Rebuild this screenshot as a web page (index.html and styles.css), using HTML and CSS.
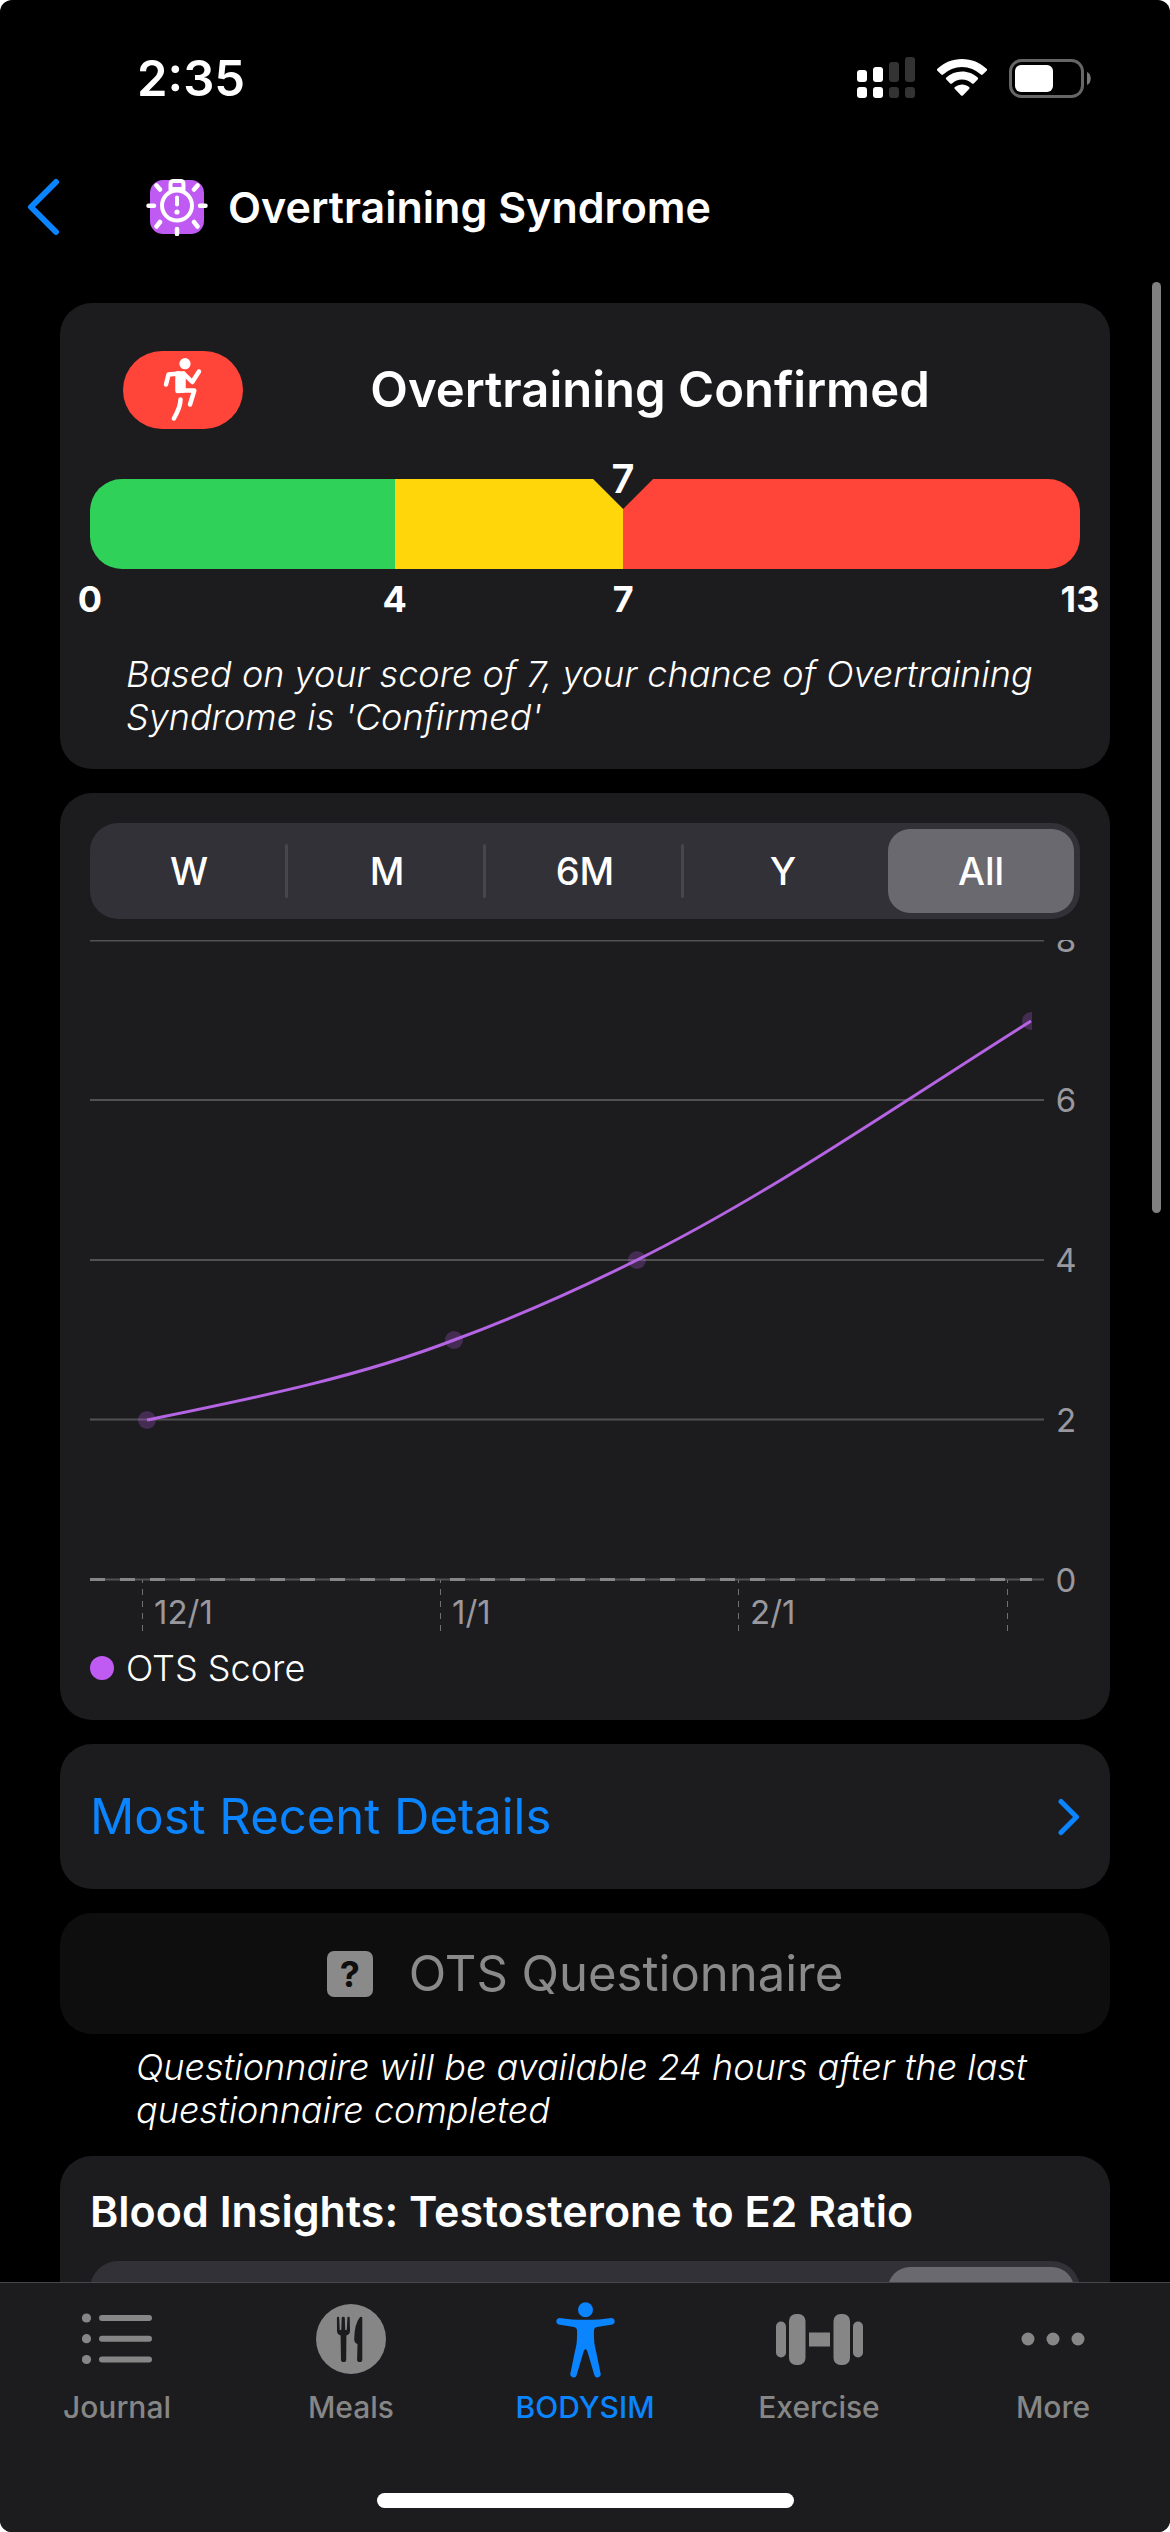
FILE: index.html
```html
<!DOCTYPE html>
<html lang="en">
<head>
<meta charset="utf-8">
<meta name="viewport" content="width=device-width, initial-scale=1">
<title>Overtraining Syndrome</title>
<link rel="stylesheet" href="styles.css">
</head>
<body>
<div class="app">
  <div class="status">
    <span class="status-time">2:35</span>
    <div class="status-icons">
      <svg width="58" height="42" viewBox="0 0 58 42" fill="#fff" aria-hidden="true">
        <rect x="0" y="13" width="10" height="12" rx="3"/><rect x="0" y="30" width="10" height="11" rx="3"/>
        <rect x="16" y="10" width="10" height="15" rx="3"/><rect x="16" y="30" width="10" height="11" rx="3"/>
        <g fill="#333">
          <rect x="32" y="5" width="10" height="20" rx="3"/><rect x="32" y="30" width="10" height="11" rx="3"/>
          <rect x="48" y="0" width="10" height="25" rx="3"/><rect x="48" y="30" width="10" height="11" rx="3"/>
        </g>
      </svg>
      <svg width="50" height="38" viewBox="0 0 50 38" fill="#fff" aria-hidden="true">
        <path d="M25 0C34.500 0 43.200 3.700 49.600 9.800a1.300 1.300 0 0 1 0 1.900l-3.900 3.900a1.300 1.300 0 0 1-1.800 0a27.200 27.200 0 0 0-37.800 0a1.300 1.300 0 0 1-1.800 0L.4 11.700a1.300 1.300 0 0 1 0-1.900C6.800 3.700 15.500 0 25 0Z"/>
        <path d="M25 12.500c6 0 11.500 2.300 15.700 6.100a1.300 1.300 0 0 1 0 1.900l-3.900 3.900a1.300 1.300 0 0 1-1.800 0a14.700 14.700 0 0 0-20 0a1.300 1.300 0 0 1-1.800 0l-3.900-3.900a1.300 1.300 0 0 1 0-1.900C13.500 14.800 19 12.500 25 12.500Z"/>
        <path d="M25 25.500c2.700 0 5.200 1 7.100 2.600a1.200 1.200 0 0 1 0 1.900l-6.200 6.400a1.300 1.300 0 0 1-1.800 0L17.900 30a1.200 1.200 0 0 1 0-1.900A11 11 0 0 1 25 25.500Z"/>
      </svg>
      <svg width="82" height="39" viewBox="0 0 82 39" aria-hidden="true">
        <rect x="1.500" y="1.500" width="72" height="36" rx="11" fill="none" stroke="#666" stroke-width="3"/>
        <rect x="6" y="6" width="38" height="27" rx="6" fill="#fff"/>
        <path d="M78 13c5 2 5 11 0 13Z" fill="#777"/>
      </svg>
    </div>
  </div>

  <header class="nav">
    <button class="back" type="button" aria-label="Back">
      <svg width="34" height="58" viewBox="0 0 34 58" fill="none" stroke="#0a84ff" stroke-width="6" stroke-linecap="round" stroke-linejoin="round"><path d="M30 4L5 29L30 54"/></svg>
    </button>
    <svg class="nav-icon" width="62" height="58" viewBox="0 0 62 58" fill="none" stroke="#fff" stroke-width="4.500" stroke-linecap="round" aria-hidden="true">
      <rect x="4" y="2" width="54" height="54" rx="13" fill="#bf5af2" stroke="none"/>
      <circle cx="31" cy="27.500" r="15" stroke-width="4"/>
      <path d="M24.500 12V6q0-3 3-3h7q3 0 3 3v6" stroke-width="4"/>
      <path d="M25 10.500h12" stroke-width="3"/>
      <path d="M31 19.500v7" stroke-width="4"/>
      <circle cx="31" cy="34" r="2.600" fill="#fff" stroke="none"/>
      <path d="M2.500 27.700h5.500M54 27.700h5.500M31 51v5M10.500 7.500l3.500 4M51.500 7.500l-3.500 4M10.500 48.500l3.500-4.500M51.500 48.500l-3.500-4.500"/>
    </svg>
    <h1 class="nav-title">Overtraining Syndrome</h1>
  </header>

  <main class="content">
    <section class="card result">
      <div class="result-head">
        <span class="pill">
          <svg width="40" height="68" viewBox="0 0 40 68" fill="none" stroke="#fff" stroke-width="4.500" stroke-linecap="round" stroke-linejoin="round" aria-hidden="true">
            <circle cx="22" cy="7.700" r="5.600" fill="#fff" stroke="none"/>
            <path d="M15.500 17.500L5.500 18.500L3 28.500"/>
            <path d="M21 18L29.300 26L36 15.500"/>
            <path d="M14.500 17.500H20.500V34.500L14.500 35Z" fill="#fff"/>
            <path d="M17 34.500H31.300L27 48.500"/>
            <path d="M17.500 43.500Q17.500 51 10.900 62.500"/>
          </svg>
        </span>
        <h2 class="result-title">Overtraining Confirmed</h2>
      </div>
      <div class="gauge">
        <div class="gauge-bar">
          <div class="zone zone-low"></div>
          <div class="zone zone-mid"></div>
          <div class="zone zone-high"></div>
        </div>
        <div class="marker" style="left: 53.85%"><span class="marker-value">7</span></div>
      </div>
      <div class="scale">
        <span class="tick" style="left: 0%">0</span>
        <span class="tick" style="left: 30.77%">4</span>
        <span class="tick" style="left: 53.85%">7</span>
        <span class="tick" style="left: 100%">13</span>
      </div>
      <p class="caption">Based on your score of 7, your chance of Overtraining Syndrome is 'Confirmed'</p>
    </section>

    <section class="card">
      <div class="segmented" role="radiogroup" aria-label="Range">
        <label class="segment"><input type="radio" name="range">W</label>
        <label class="segment"><input type="radio" name="range">M</label>
        <label class="segment"><input type="radio" name="range">6M</label>
        <label class="segment"><input type="radio" name="range">Y</label>
        <label class="segment"><input type="radio" name="range" checked>All</label>
      </div>
      <svg class="chart" viewBox="0 0 990 700" role="img" aria-label="OTS Score over time">
        <defs><clipPath id="plot"><rect x="0" y="0" width="942" height="641"/></clipPath></defs>
        <g class="grid">
          <path d="M0 .5H954M0 160H954M0 320H954M0 479.500H954M0 639.500H954"/>
        </g>
        <path class="baseline" d="M0 639.500H942"/>
        <path class="ticks" d="M52.500 640V692M350.500 640V692M648.500 640V692M917.500 640V692"/>
        <g clip-path="url(#plot)">
          <g class="points">
            <circle cx="57" cy="480" r="9"/><circle cx="364" cy="400" r="9"/>
            <circle cx="547" cy="320" r="9"/><circle cx="941" cy="81" r="9"/>
          </g>
          <path class="series" d="M57 480C159 459 266 438 364 400C426 377 487 350 547 320C682 253 812 162 941 81"/>
        </g>
        <g class="axis" text-anchor="middle">
          <text x="976" y="12">8</text><text x="976" y="172">6</text><text x="976" y="332">4</text>
          <text x="976" y="492">2</text><text x="976" y="652">0</text>
        </g>
        <g class="axis">
          <text x="64" y="684">12/1</text><text x="362" y="684">1/1</text><text x="660" y="684">2/1</text>
        </g>
      </svg>
      <div class="legend"><span class="legend-dot"></span>OTS Score</div>
    </section>

    <a class="card link-card" href="#details">
      <span>Most Recent Details</span>
      <svg width="22" height="38" viewBox="0 0 22 38" fill="none" stroke="#0a84ff" stroke-width="5" stroke-linecap="round" stroke-linejoin="round" aria-hidden="true"><path d="M3 3.500L18.500 19L3 34.500"/></svg>
    </a>

    <div class="questionnaire">
      <button class="quiz-button" type="button" disabled>
        <span class="quiz-icon" aria-hidden="true">?</span>
        <span>OTS Questionnaire</span>
      </button>
      <p class="note">Questionnaire will be available 24 hours after the last questionnaire completed</p>
    </div>

    <section class="card">
      <h2 class="insights-title">Blood Insights: Testosterone to E2 Ratio</h2>
      <div class="segmented" role="radiogroup" aria-label="Insights range">
        <label class="segment"><input type="radio" name="insights" aria-label="W"></label>
        <label class="segment"><input type="radio" name="insights" aria-label="M"></label>
        <label class="segment"><input type="radio" name="insights" aria-label="6M"></label>
        <label class="segment"><input type="radio" name="insights" aria-label="Y"></label>
        <label class="segment"><input type="radio" name="insights" aria-label="All" checked></label>
      </div>
    </section>
    <div class="scrollbar"></div>
  </main>

  <footer class="tabbar">
    <nav class="tabs">
      <a class="tab" href="#journal">
        <span class="tab-icon"><svg width="70" height="52" viewBox="0 0 70 52" fill="currentColor" aria-hidden="true">
          <circle cx="4.500" cy="5" r="4.600"/><circle cx="4.500" cy="25.700" r="4.600"/><circle cx="4.500" cy="46.500" r="4.600"/>
          <rect x="17" y="2" width="53" height="6" rx="3"/><rect x="17" y="22.700" width="53" height="6" rx="3"/><rect x="17" y="43.500" width="53" height="6" rx="3"/>
        </svg></span>
        Journal
      </a>
      <a class="tab" href="#meals">
        <span class="tab-icon"><svg width="70" height="70" viewBox="0 0 70 70" aria-hidden="true">
          <circle cx="35" cy="35" r="35" fill="#868686"/>
          <g fill="#1c1c1e">
            <path d="M22 12.700q1.200 0 1.200 1.300L23.700 26h1.600L25.700 14q0-1.300 1.500-1.300T28.800 14L29.200 26h1.600L31.400 14q0-1.300 1.200-1.300T33.700 14L34 27q0 3-3.600 4.500L30.200 55.500a2.600 2.600 0 0 1-5.200 0L24.600 31.500Q21 30 21 27L20.900 14q0-1.300 1.100-1.300Z"/>
            <path d="M45 12.700q1.300 0 1.300 1.300V55.500a2.600 2.600 0 0 1-5.200 0L41.500 40Q38 38.500 38.200 35Q38.500 20 43.500 13.800Q44.300 12.700 45 12.700Z"/>
          </g>
        </svg></span>
        Meals
      </a>
      <a class="tab tab-active" href="#bodysim">
        <span class="tab-icon"><svg width="61" height="77" viewBox="0 0 61 77" fill="currentColor" aria-hidden="true">
          <circle cx="30.500" cy="8.700" r="7.500"/>
          <path d="M4.500 16.900C20 19.500 41 19.500 56.500 16.900A3.500 3.500 0 0 1 57.600 23.600L42 26Q39 26.500 39 29.500Q38.500 42 41 50L45.500 72A3.200 3.200 0 0 1 39.400 74.200L32.400 50.500Q30.500 45.500 28.600 50.500L21.600 74.200A3.200 3.200 0 0 1 15.500 72L20 50Q22.500 42 22 29.500Q22 26.500 19 26L3.400 23.600A3.500 3.500 0 0 1 4.500 16.900Z"/>
        </svg></span>
        BODYSIM
      </a>
      <a class="tab" href="#exercise">
        <span class="tab-icon"><svg width="87" height="51" viewBox="0 0 87 51" fill="currentColor" aria-hidden="true">
          <rect x="0" y="7.500" width="10" height="36" rx="5"/><rect x="13" y="0" width="16.500" height="51" rx="7"/>
          <rect x="33" y="18.500" width="21" height="14"/>
          <rect x="57.500" y="0" width="16.500" height="51" rx="7"/><rect x="77" y="7.500" width="10" height="36" rx="5"/>
        </svg></span>
        Exercise
      </a>
      <a class="tab" href="#more">
        <span class="tab-icon"><svg width="64" height="14" viewBox="0 0 64 14" fill="currentColor" aria-hidden="true">
          <circle cx="7" cy="7" r="6.500"/><circle cx="32" cy="7" r="6.500"/><circle cx="57" cy="7" r="6.500"/>
        </svg></span>
        More
      </a>
    </nav>
    <div class="home-indicator"></div>
  </footer>
</div>
</body>
</html>
```
FILE: styles.css
```css
* {
  box-sizing: border-box;
}

html {
  background: #fff;
}

body {
  margin: 0;
  font-family: Inter, "Liberation Sans", sans-serif;
  color: #fff;
}

h1, h2, p {
  margin: 0;
}

svg {
  display: block;
  flex-shrink: 0;
}

button {
  border: 0;
  padding: 0;
  background: none;
  font: inherit;
  color: inherit;
}

a {
  color: inherit;
  text-decoration: none;
}

.app {
  display: flex;
  flex-direction: column;
  height: 100vh;
  overflow: hidden;
  background: #000;
  border-radius: 12px;
}

/* Status bar */
.status {
  display: flex;
  align-items: center;
  justify-content: space-between;
  flex-shrink: 0;
  height: 156px;
  padding: 0 79px 0 137px;
}

.status-time {
  font-size: 49px;
  font-weight: 600;
}

.status-icons {
  display: flex;
  align-items: center;
  gap: 22px;
}

/* Navigation header */
.nav {
  display: flex;
  align-items: center;
  flex-shrink: 0;
  height: 102px;
  padding: 0 26px;
}

.back {
  margin-right: 86px;
}

.nav-icon {
  margin-right: 20px;
}

.nav-title {
  font-size: 43px;
  font-weight: 600;
}

/* Scrolling content */
.content {
  position: relative;
  display: flex;
  flex: 1;
  flex-direction: column;
  gap: 24px;
  min-height: 0;
  padding: 45px 60px 0;
  overflow: hidden;
}

.scrollbar {
  position: absolute;
  top: 24px;
  right: 9px;
  width: 9px;
  height: 46%;
  border-radius: 5px;
  background: #808080;
}

.card {
  flex-shrink: 0;
  padding: 30px;
  border-radius: 32px;
  background: #1c1c1e;
}

/* Result card */
.result {
  padding-top: 48px;
}

.result-head {
  display: flex;
  align-items: center;
  gap: 10px;
  padding: 0 33px;
}

.pill {
  display: flex;
  align-items: center;
  justify-content: center;
  width: 120px;
  height: 78px;
  border-radius: 39px;
  background: #ff453a;
}

.result-title {
  flex: 1;
  font-size: 49px;
  font-weight: 600;
  line-height: 60px;
  text-align: center;
}

.gauge {
  position: relative;
  margin-top: 50px;
}

.gauge-bar {
  display: flex;
  height: 90px;
  overflow: hidden;
  border-radius: 32px;
}

.zone-low {
  flex: 4;
  background: #30d158;
}

.zone-mid {
  flex: 3;
  background: #ffd60a;
}

.zone-high {
  flex: 6;
  background: #ff453a;
}

.marker {
  position: absolute;
  top: -30px;
  width: 60px;
  height: 60px;
  transform: translateX(-50%);
  background: #1c1c1e;
  clip-path: polygon(0 0, 100% 0, 100% 50%, 50% 100%, 0 50%);
  text-align: center;
}

.marker-value {
  font-size: 40px;
  font-weight: 600;
  line-height: 60px;
}

.scale {
  position: relative;
  height: 44px;
  margin-top: 8px;
}

.tick {
  position: absolute;
  transform: translateX(-50%);
  font-size: 36px;
  font-weight: 700;
  line-height: 44px;
}

.caption,
.note {
  font-size: 36px;
  font-style: italic;
  font-weight: 300;
  line-height: 43px;
}

.caption {
  margin-top: 32px;
  padding: 0 36px;
}

/* Segmented control */
.segmented {
  display: grid;
  grid-template-columns: repeat(5, 1fr);
  height: 96px;
  border-radius: 28px;
  background: #323137;
}

.segment {
  position: relative;
  display: flex;
  align-items: center;
  justify-content: center;
  font-size: 38px;
  font-weight: 500;
}

.segment input {
  position: absolute;
  inset: 0;
  margin: 0;
  opacity: 0;
}

.segment::after {
  content: "";
  position: absolute;
  top: 21px;
  right: 0;
  bottom: 21px;
  width: 3px;
  border-radius: 2px;
  background: #47464c;
}

.segment:nth-last-child(-n + 2)::after {
  display: none;
}

.segment:has(:checked) {
  margin: 6px;
  border-radius: 22px;
  background: #6a696f;
}

/* Chart */
.chart {
  width: 100%;
  height: auto;
  margin-top: 21px;
  overflow: hidden;
}

.grid {
  stroke: #515153;
  stroke-width: 2;
}

.baseline {
  stroke: #868686;
  stroke-width: 3;
  stroke-dasharray: 15 15;
}

.ticks {
  stroke: #707073;
  stroke-width: 1;
  stroke-dasharray: 6 6;
  stroke-dashoffset: 3;
}

.points {
  fill: #bf5af2;
  fill-opacity: 0.25;
}

.series {
  fill: none;
  stroke: #b564e3;
  stroke-width: 3;
}

.axis {
  fill: #98989e;
  font-size: 33px;
}

.legend {
  display: flex;
  align-items: center;
  gap: 12px;
  margin-top: 6px;
  font-size: 36px;
  font-weight: 300;
  line-height: 44px;
}

.legend-dot {
  width: 24px;
  height: 24px;
  border-radius: 50%;
  background: #bf5af2;
}

/* Details link and questionnaire */
.link-card {
  display: flex;
  align-items: center;
  justify-content: space-between;
  padding: 42px 30px;
  color: #0a84ff;
  font-size: 49px;
  line-height: 61px;
}

.quiz-button {
  display: flex;
  align-items: center;
  justify-content: center;
  gap: 36px;
  width: 100%;
  padding: 30px;
  border-radius: 32px;
  background: #0e0e0f;
  color: #8a8a8a;
  font-size: 49px;
  line-height: 61px;
}

.quiz-icon {
  width: 46px;
  height: 46px;
  border-radius: 7px;
  background: #8a8a8a;
  color: #0e0e0f;
  font-size: 36px;
  font-weight: 700;
  line-height: 46px;
}

.note {
  margin-top: 12px;
  padding: 0 76px;
}

.insights-title {
  margin-bottom: 25px;
  font-size: 43px;
  font-weight: 600;
  line-height: 50px;
}

/* Tab bar */
.tabbar {
  flex-shrink: 0;
  padding-bottom: 24px;
  border-top: 1px solid #48484b;
  background: #1c1c1e;
}

.tabs {
  display: flex;
  padding-top: 16px;
}

.tab {
  display: flex;
  flex: 1;
  flex-direction: column;
  align-items: center;
  gap: 10px;
  color: #868686;
  font-size: 30px;
  font-weight: 500;
  line-height: 36px;
}

.tab-active {
  color: #0a84ff;
}

.tab-icon {
  display: flex;
  align-items: center;
  height: 80px;
}

.home-indicator {
  width: 417px;
  max-width: 60%;
  height: 15px;
  margin: 68px auto 0;
  border-radius: 8px;
  background: #fff;
}
```
